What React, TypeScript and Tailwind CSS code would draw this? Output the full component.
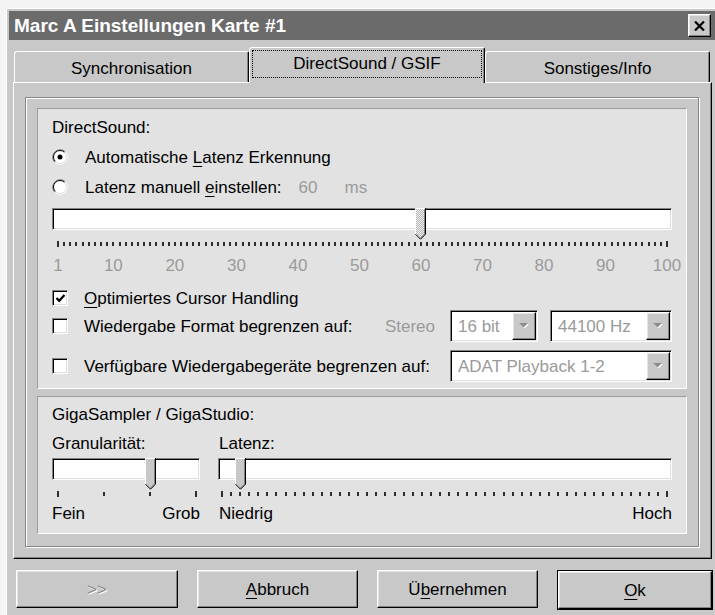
import React from 'react';

// classic 3D bevels
const RAISED =
  'border border-t-white border-l-white border-r-black border-b-black shadow-[inset_-1px_-1px_#838383,inset_1px_1px_#e4e4e4]';
const SUNKEN =
  'border border-t-[#838383] border-l-[#838383] border-r-white border-b-white shadow-[inset_1px_1px_#000,inset_-1px_-1px_#dedede]';
const PANEL =
  'border border-t-[#9c9c9c] border-l-[#9c9c9c] border-r-white border-b-white bg-[#e2e2e2]';
const DISABLED = 'text-[#9a9a9a]';

const Key = ({ children }: { children: React.ReactNode }) => (
  <span className="underline decoration-1 underline-offset-[3px]">{children}</span>
);

const Radio = ({ checked }: { checked?: boolean }) => (
  <svg width="16" height="16" viewBox="0 0 16 16" className="shrink-0">
    <circle cx="8" cy="8" r="7" fill="#fff" />
    <path d="M2.7 13.3A7.5 7.5 0 0 1 13.3 2.7" stroke="#7a7a7a" fill="none" />
    <path d="M13.3 2.7A7.5 7.5 0 0 1 2.7 13.3" stroke="#fff" fill="none" />
    <path d="M3.4 12.6A6.5 6.5 0 0 1 12.6 3.4" stroke="#000" fill="none" />
    <path d="M12.6 3.4A6.5 6.5 0 0 1 3.4 12.6" stroke="#dcdcdc" fill="none" />
    {checked && <circle cx="8" cy="8" r="2.5" fill="#000" />}
  </svg>
);

const Checkbox = ({ checked }: { checked?: boolean }) => (
  <div className={`flex h-[16px] w-[16px] shrink-0 items-center justify-center bg-white ${SUNKEN}`}>
    {checked && (
      <svg width="11" height="11" viewBox="0 0 11 11">
        <path d="M1.5 5 L4.2 7.8 L9.5 2" stroke="#000" strokeWidth="2.2" fill="none" />
      </svg>
    )}
  </div>
);

const Arrow = () => (
  <svg width="10" height="6" viewBox="0 0 10 6">
    <path d="M1 1 H10 L5.5 5.5 Z" fill="#fff" />
    <path d="M0 0 H9 L4.5 4.5 Z" fill="#8c8c8c" />
  </svg>
);

const Select = ({ value, className }: { value: string; className: string }) => (
  <div className={`flex h-[32px] bg-white p-[1px] ${SUNKEN} ${className}`}>
    <span className={`flex flex-1 items-center pl-[6px] ${DISABLED}`}>{value}</span>
    <span className={`flex w-[24px] items-center justify-center bg-[#c8c8c8] ${RAISED}`}>
      <Arrow />
    </span>
  </div>
);

const Thumb = ({ focused, left }: { focused?: boolean; left: number }) => (
  <svg width="11" height="32" viewBox="0 0 11 32" className="absolute top-0" style={{ left }}>
    <defs>
      <pattern id="thumb-dither" width="2" height="2" patternUnits="userSpaceOnUse">
        <rect width="2" height="2" fill="#f2f2f2" />
        <rect width="1" height="1" fill="#b4b4b4" />
        <rect x="1" y="1" width="1" height="1" fill="#b4b4b4" />
      </pattern>
    </defs>
    <path d="M0.5 0.5 H10.5 V26 L5.5 31 L0.5 26 Z" fill={focused ? 'url(#thumb-dither)' : '#c8c8c8'} />
    <path d="M0.5 26 V0.5 H10" stroke="#fff" fill="none" />
    <path d="M9.5 1 V26 L5.5 30" stroke="#838383" fill="none" />
    <path d="M10.5 0 V26.2 L5.5 31.2 L0.5 26.2" stroke="#000" fill="none" />
  </svg>
);

interface SliderProps {
  width: number;
  ticks: number;
  value: number;
  startPad: number;
  endPad: number;
  focused?: boolean;
  labels?: { index: number; text: string }[];
}

const Slider = ({ width, ticks, value, startPad, endPad, focused, labels }: SliderProps) => {
  const step = (width - startPad - endPad) / (ticks - 1);
  const xs = Array.from({ length: ticks }, (_, i) => startPad + step * i);
  return (
    <div>
      <div className="relative h-[32px]">
        <div className={`mt-[2px] h-[22px] bg-white ${SUNKEN}`} />
        <Thumb focused={focused} left={Math.round(xs[value] - 5.5)} />
      </div>
      <svg width={width} height="8" className="block">
        {xs.map((x, i) => (
          <rect
            key={i}
            x={Math.round(x) - 1}
            y={i === 0 || i === ticks - 1 ? 1 : 2}
            width="2"
            height={i === 0 || i === ticks - 1 ? 6 : 4}
            fill="#2e2e2e"
          />
        ))}
      </svg>
      {labels && (
        <div className={`relative mt-[7px] h-[20px] ${DISABLED}`}>
          {labels.map((l) => (
            <span
              key={l.text}
              className="absolute top-0 flex h-[20px] -translate-x-1/2 items-center"
              style={{ left: xs[l.index] }}
            >
              {l.text}
            </span>
          ))}
        </div>
      )}
    </div>
  );
};

const scale = [
  { index: 0, text: '1' },
  ...[10, 20, 30, 40, 50, 60, 70, 80, 90, 100].map((n) => ({ index: n - 1, text: String(n) })),
];

const Tab = ({ label, className }: { label: string; className: string }) => (
  <div
    className={`flex h-[31px] items-center justify-center rounded-tl-[3px] rounded-tr-[2px] border-t border-l border-r border-t-white border-l-white border-r-black pt-[3px] shadow-[inset_-1px_0_#838383] ${className}`}
  >
    {label}
  </div>
);

const DirectSoundPanel = () => (
  <div className={`h-[281px] w-[650px] px-[14px] ${PANEL}`}>
    <div className="mt-[8px] flex h-[20px] items-center">DirectSound:</div>
    <div className="mt-[10px] flex h-[20px] items-center">
      <Radio checked />
      <span className="ml-[17px]">
        Automatische <Key>L</Key>atenz Erkennung
      </span>
    </div>
    <div className="mt-[10px] flex h-[20px] items-center">
      <Radio />
      <span className="ml-[17px]">
        Latenz manuell <Key>e</Key>instellen:
      </span>
      <span className={`ml-[17px] ${DISABLED}`}>60</span>
      <span className={`ml-[27px] ${DISABLED}`}>ms</span>
    </div>
    <div className="mt-[11px]">
      <Slider width={620} ticks={100} value={59} startPad={6} endPad={5} focused labels={scale} />
    </div>
    <div className="mt-[13px] flex h-[20px] items-center">
      <Checkbox checked />
      <span className="ml-[16px]">
        <Key>O</Key>ptimiertes Cursor Handling
      </span>
    </div>
    <div className="mt-[2px] flex h-[32px] items-center">
      <Checkbox />
      <span className="ml-[16px]">Wiedergabe Format begrenzen auf:</span>
      <span className={`ml-auto mr-[15px] ${DISABLED}`}>Stereo</span>
      <Select value="16 bit" className="w-[88px]" />
      <Select value="44100 Hz" className="ml-[12px] w-[122px]" />
    </div>
    <div className="mt-[8px] flex h-[32px] items-center">
      <Checkbox />
      <span className="ml-[16px]">Verfügbare Wiedergabegeräte begrenzen auf:</span>
      <Select value="ADAT Playback 1-2" className="ml-auto w-[222px]" />
    </div>
  </div>
);

const GigaPanel = () => (
  <div className={`mt-[7px] h-[138px] w-[650px] px-[14px] ${PANEL}`}>
    <div className="mt-[7px] flex h-[20px] items-center">GigaSampler / GigaStudio:</div>
    <div className="mt-[9px] flex">
      <div className="w-[148px]">
        <div className="flex h-[20px] items-center">Granularität:</div>
        <div className="mt-[5px]">
          <Slider width={148} ticks={4} value={2} startPad={6} endPad={4} />
        </div>
        <div className="mt-[5px] flex h-[20px] items-center justify-between">
          <span>Fein</span>
          <span>Grob</span>
        </div>
      </div>
      <div className="ml-[18px] w-[454px]">
        <div className="flex h-[20px] items-center pl-[1px]">Latenz:</div>
        <div className="mt-[5px]">
          <Slider width={454} ticks={50} value={2} startPad={4} endPad={5} />
        </div>
        <div className="mt-[5px] flex h-[20px] items-center justify-between pl-[1px]">
          <span>Niedrig</span>
          <span>Hoch</span>
        </div>
      </div>
    </div>
  </div>
);

const Button = ({ children, className, disabled }: { children: React.ReactNode; className: string; disabled?: boolean }) => (
  <button
    className={`flex h-[38px] items-center justify-center bg-[#c8c8c8] ${RAISED} ${
      disabled ? 'text-[#8c8c8c] [text-shadow:1px_1px_0_#fff]' : ''
    } ${className}`}
  >
    {children}
  </button>
);

export default function App() {
  return (
    <div className="h-[615px] w-[715px] overflow-hidden bg-[#f4f4f4] pl-[6px] pt-[8px] font-['Liberation_Sans',Arial,sans-serif] text-[17px] leading-none text-black">
      <div className="h-[640px] w-[720px] border-l border-t border-white bg-[#c8c8c8] pl-[2px] pt-[2px]">
        <div className="flex h-[29px] items-center bg-[#6b6b6b] pl-[5px] pr-[15px]">
          <span className="text-[19px] font-bold text-white">Marc A Einstellungen Karte #1</span>
          <div className={`ml-auto flex h-[23px] w-[23px] items-center justify-center bg-[#c8c8c8] ${RAISED}`}>
            <svg width="11" height="10" viewBox="0 0 11 10">
              <path d="M1 0.5 L10 9.5 M10 0.5 L1 9.5" stroke="#000" strokeWidth="2.2" />
            </svg>
          </div>
        </div>

        <div className="pl-[4px] pt-[7px]">
          <div className="flex h-[35px] items-end pl-[1px]">
            <Tab label="Synchronisation" className="w-[235px]" />
            <div className="relative z-10 -mb-[1px] h-[36px] w-[236px] rounded-tl-[3px] rounded-tr-[2px] border-t border-l border-r border-t-white border-l-white border-r-black bg-[#c8c8c8] px-[2px] pb-[5px] pt-[2px] shadow-[inset_-1px_0_#838383]">
              <div className="flex h-full items-center justify-center border border-dotted border-black pb-[2px]">
                DirectSound / GSIF
              </div>
            </div>
            <Tab label="Sonstiges/Info" className="w-[225px]" />
          </div>

          <div className="h-[477px] w-[699px] border border-t-white border-l-white border-r-black border-b-black pl-[11px] pt-[14px] shadow-[inset_-1px_-1px_#838383]">
            <div className="h-[450px] w-[674px] border border-[#878787] pl-[11px] pt-[10px] shadow-[inset_1px_1px_#fff,1px_1px_#fff]">
              <DirectSoundPanel />
              <GigaPanel />
            </div>
          </div>

          <div className="mt-[11px] flex gap-[19px] pl-[3px]">
            <Button disabled className="w-[162px]">
              &gt;&gt;
            </Button>
            <Button className="w-[161px]">
              <span>
                <Key>A</Key>bbruch
              </span>
            </Button>
            <Button className="w-[161px]">
              <span>
                Ü<Key>b</Key>ernehmen
              </span>
            </Button>
            <div className="w-[156px] border border-black">
              <Button className="h-[36px] w-full">
                <span>
                  <Key>O</Key>k
                </span>
              </Button>
            </div>
          </div>
        </div>
      </div>
    </div>
  );
}
